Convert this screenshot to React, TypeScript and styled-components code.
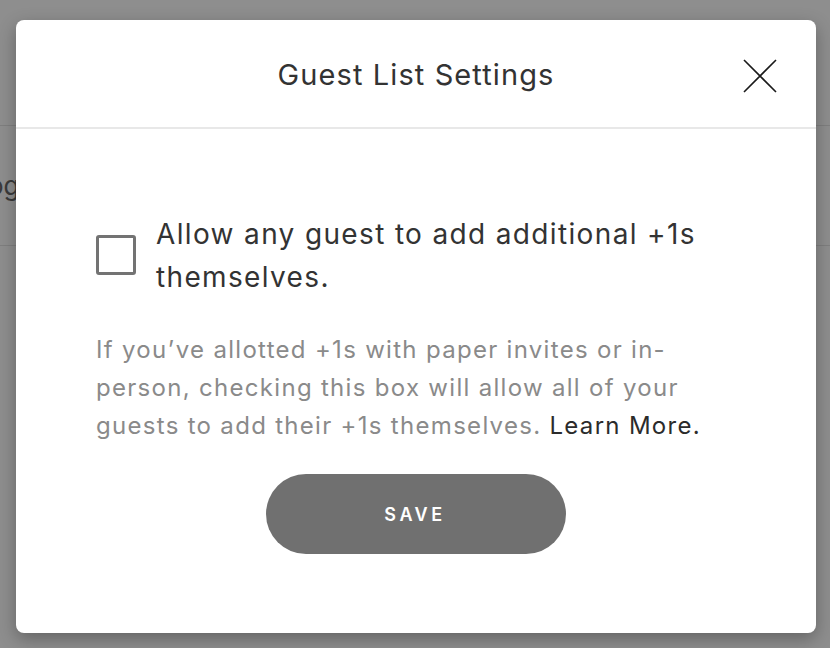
import styled, { createGlobalStyle } from "styled-components";

const GlobalStyle = createGlobalStyle`
  html, body {
    margin: 0;
    padding: 0;
    background: #8e8e8e;
    font-family: Inter, "Open Sans", "Liberation Sans", sans-serif;
  }
  * {
    box-sizing: border-box;
  }
`;

const Page = styled.div`
  position: relative;
  width: 830px;
  height: 648px;
  overflow: hidden;
  background: #8e8e8e;
`;

const BehindRow = styled.div<{ $height: number }>`
  height: ${(p) => p.$height}px;
  border-bottom: 1px solid #7f7f7f;
  display: flex;
  align-items: center;
  color: #3a3a3a;
  font-size: 26px;
  margin-left: -12px;
`;

const Modal = styled.div`
  position: absolute;
  left: 16px;
  top: 20px;
  width: 800px;
  height: 613px;
  background: #fff;
  border-radius: 8px;
  box-shadow: 0 6px 18px rgba(0, 0, 0, 0.3);
  display: flex;
  flex-direction: column;
`;

const Header = styled.div`
  height: 109px;
  border-bottom: 2px solid #e8e8e8;
  display: flex;
  align-items: center;
  justify-content: center;
  position: relative;
`;

const Title = styled.h1`
  margin: 0;
  font-size: 29px;
  font-weight: 400;
  color: #333;
  letter-spacing: 1.1px;
  padding-top: 2px;
`;

const CloseButton = styled.button`
  position: absolute;
  right: 39px;
  top: 39px;
  width: 34px;
  height: 34px;
  padding: 0;
  border: none;
  background: none;
  cursor: pointer;
`;

const Body = styled.div`
  padding: 84px 80px 0 80px;
  display: flex;
  flex-direction: column;
`;

const CheckRow = styled.label`
  display: flex;
  align-items: flex-start;
  gap: 20px;
`;

const Box = styled.span`
  flex: none;
  width: 40px;
  height: 40px;
  margin-top: 22px;
  border: 3px solid #737373;
  border-radius: 3px;
`;

const LabelText = styled.span`
  font-size: 28px;
  line-height: 43px;
  color: #333;
  letter-spacing: 1.35px;
  max-width: 580px;
`;

const Description = styled.p`
  margin: 32px 0 0 0;
  font-size: 24px;
  line-height: 38px;
  color: #8a8a8a;
  letter-spacing: 1.3px;
  max-width: 630px;
`;

const LearnMore = styled.a`
  color: #2b2b2b;
  text-decoration: none;
`;

const SaveButton = styled.button`
  align-self: center;
  margin-top: 29px;
  width: 300px;
  height: 80px;
  border: none;
  border-radius: 40px;
  background: #707070;
  color: #fff;
  font-family: inherit;
  font-size: 18px;
  font-weight: 600;
  letter-spacing: 3.5px;
  padding-left: 4px;
`;

export default function App() {
  return (
    <Page>
      <GlobalStyle />
      <BehindRow $height={126} />
      <BehindRow $height={120}>og</BehindRow>
      <Modal>
        <Header>
          <Title>Guest List Settings</Title>
          <CloseButton aria-label="Close">
            <svg width="34" height="34" viewBox="0 0 34 34">
              <path d="M1 1 L33 33 M33 1 L1 33" stroke="#1a1a1a" strokeWidth="1.6" fill="none" />
            </svg>
          </CloseButton>
        </Header>
        <Body>
          <CheckRow>
            <Box />
            <LabelText>Allow any guest to add additional +1s themselves.</LabelText>
          </CheckRow>
          <Description>
            If you’ve allotted +1s with paper invites or in-person, checking this box will allow all of
            your guests to add their +1s themselves. <LearnMore href="#">Learn More.</LearnMore>
          </Description>
          <SaveButton>SAVE</SaveButton>
        </Body>
      </Modal>
    </Page>
  );
}
